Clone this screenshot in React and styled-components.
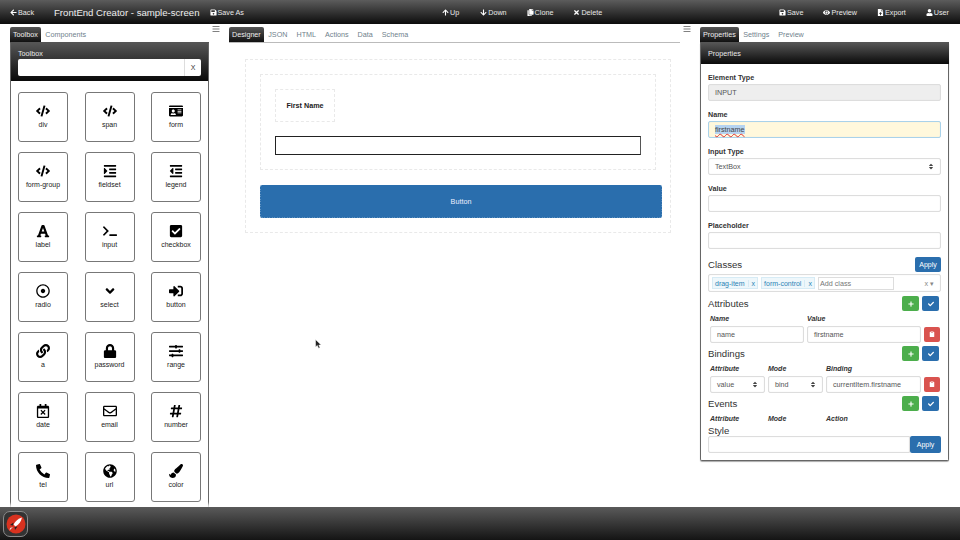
import React from 'react';
import styled, {createGlobalStyle} from 'styled-components';
import {
  FaArrowLeft, FaSave, FaArrowUp, FaArrowDown, FaCopy, FaTimes, FaEye, FaUser, FaFileUpload,
  FaBars, FaCode, FaIdCard, FaIndent, FaOutdent, FaFont, FaTerminal, FaCheckSquare, FaRegDotCircle,
  FaAngleDown, FaSignInAlt, FaLink, FaLock, FaSlidersH, FaRegCalendarTimes, FaRegEnvelope,
  FaHashtag, FaPhoneAlt, FaGlobeAmericas, FaPaintBrush, FaPlus, FaCheck, FaClipboard, FaSort
} from 'react-icons/fa';

const GlobalStyle = createGlobalStyle`
  html, body {
    margin: 0;
    padding: 0;
    background: #fff;
  }
  * {
    box-sizing: border-box;
  }
`;

const Page = styled.div`
  position: relative;
  width: 960px;
  height: 540px;
  display: flex;
  flex-direction: column;
  overflow: hidden;
  font-family: "Liberation Sans", Arial, sans-serif;
  font-size: 7px;
  color: #333;
`;

const TopBar = styled.div`
  flex: 0 0 24px;
  display: flex;
  align-items: center;
  padding: 0 11px 0 10px;
  background: linear-gradient(#5c5c5c, #0c0c0c);
  color: #e8e8e8;
`;

const BarGroup = styled.div`
  display: flex;
  align-items: center;
  width: ${p => p.$width || 'auto'};
  margin-left: ${p => p.$left || 0};
`;

const BarItem = styled.span`
  display: inline-flex;
  align-items: center;
  gap: 1px;
  margin-right: ${p => p.$gap || 0};
  font-size: 7.2px;
  white-space: nowrap;
  svg {
    width: 7px;
    height: 7px;
    color: #fff;
  }
`;

const Title = styled.span`
  margin: 0 10px 0 20px;
  font-size: 9.6px;
  color: #eee;
  white-space: nowrap;
`;

const Main = styled.div`
  flex: 1;
  min-height: 0;
  display: grid;
  grid-template-columns: 199px 451px 249px;
  column-gap: 20px;
  padding: 3px 0 0 10px;
  overflow: hidden;
  position: relative;
`;

const Column = styled.div`
  position: relative;
  min-width: 0;
`;

const Splitter = styled(FaBars)`
  position: absolute;
  top: -2px;
  left: -17px;
  width: 8px;
  height: 8px;
  color: #808080;
`;

const Tabs = styled.div`
  display: flex;
  height: 16px;
  border-bottom: 1px solid ${p => p.$line || '#555'};
`;

const Tab = styled.div`
  display: flex;
  align-items: center;
  height: 15px;
  padding: 0 ${p => p.$active ? '3px' : '4.5px'};
  border-radius: 2px 2px 0 0;
  font-size: 7.2px;
  color: ${p => p.$active ? '#eee' : '#6f7f8c'};
  background: ${p => p.$active ? 'linear-gradient(#555, #111)' : 'transparent'};
`;

const Panel = styled.div`
  border: 1px solid #666;
  border-top: 0;
  border-bottom: ${p => p.$closed ? '1px solid #666' : 0};
  border-radius: 0 0 2px 2px;
  height: ${p => p.$height};
  box-shadow: ${p => p.$closed ? '0 1px 1px #aaa' : 'none'};
`;

const ToolHeader = styled.div`
  height: 38px;
  padding: 6px 7px 0;
  color: #e8e8e8;
  font-size: 7.2px;
  background: linear-gradient(#555, #0a0a0a);
`;

const SearchRow = styled.div`
  display: flex;
  height: 17px;
  margin-top: 1px;
  background: #fff;
  border-radius: 2px;
  overflow: hidden;
`;

const SearchInput = styled.div`
  flex: 1;
`;

const SearchClear = styled.div`
  width: 17px;
  display: flex;
  align-items: center;
  justify-content: center;
  border-left: 1px solid #ddd;
  color: #333;
  font-size: 7px;
`;

const ToolGrid = styled.div`
  display: grid;
  grid-template-columns: repeat(3, 50px);
  justify-content: space-between;
  grid-auto-rows: 50px;
  row-gap: 10px;
  padding: 11px 7px 0 7px;
`;

const Tile = styled.div`
  display: flex;
  flex-direction: column;
  align-items: center;
  padding-top: 11px;
  border: 1px solid #777;
  border-radius: 3px;
  background: #fff;
  color: #222;
  font-size: 7px;
  svg {
    width: 14px;
    height: 14px;
    color: #000;
  }
`;

const TileLabel = styled.span`
  margin-top: 1.5px;
  line-height: 9px;
  white-space: nowrap;
`;

const Canvas = styled.div`
  margin: 16px 9px 0 16px;
  padding: 14px;
  height: 174px;
  border: 1px dashed #e9e9e9;
`;

const RowBox = styled.div`
  height: 96px;
  width: 396px;
  padding: 14px;
  border: 1px dashed #e9e9e9;
`;

const LabelBox = styled.div`
  display: flex;
  align-items: center;
  justify-content: center;
  width: 60px;
  height: 33px;
  border: 1px dashed #e9e9e9;
  font-size: 7.2px;
  font-weight: bold;
  color: #222;
`;

const BlackInput = styled.div`
  margin-top: 14px;
  width: 366px;
  height: 19px;
  border: 1.5px solid #222;
  border-right-color: #555;
`;

const WideButton = styled.div`
  display: flex;
  align-items: center;
  justify-content: center;
  margin-top: 15px;
  width: 402px;
  height: 33px;
  border: 1px dashed #fff;
  outline: 1px dashed #2a6ead;
  outline-offset: -1px;
  border-radius: 2px;
  background: #2a6ead;
  color: #eef;
  font-size: 7.2px;
`;

const PanelHeader = styled.div`
  height: 21px;
  display: flex;
  align-items: center;
  padding-left: 7px;
  margin: 0 -1px 0 0;
  color: #e8e8e8;
  font-size: 7.2px;
  background: linear-gradient(#555, #0a0a0a);
`;

const Form = styled.div`
  padding: 8px 7px 0;
`;

const Field = styled.div`
  height: 37px;
`;

const Label = styled.div`
  height: 12px;
  padding-top: 1px;
  line-height: 9px;
  font-size: 7.2px;
  font-weight: bold;
  color: #333;
`;

const Input = styled.div`
  display: flex;
  align-items: center;
  justify-content: space-between;
  height: ${p => p.$height || '17px'};
  width: ${p => p.$width || '100%'};
  padding: 0 ${p => p.$pad || '6px'};
  border: 1px solid ${p => p.$focus ? '#a9d2ea' : '#ddd'};
  border-radius: 2px;
  background: ${p => p.$disabled ? '#eee' : p.$focus ? '#fff8dc' : '#fff'};
  box-shadow: inset 0 0 1px #ddd;
  color: #555;
  font-size: 7.2px;
  white-space: nowrap;
  svg {
    width: 6px;
    height: 7px;
    color: #444;
  }
`;

const Selected = styled.span`
  background: #b5d3f0;
  color: #444;
  text-decoration: underline wavy #d33 0.5px;
`;

const SectionRow = styled.div`
  display: flex;
  align-items: center;
  justify-content: space-between;
  height: ${p => p.$height || '15px'};
`;

const Heading = styled.div`
  font-size: 9.6px;
  line-height: 11px;
  color: #333;
`;

const Btn = styled.div`
  display: inline-flex;
  align-items: center;
  justify-content: center;
  width: ${p => p.$width || '17px'};
  height: ${p => p.$height || '15px'};
  border-radius: 2px;
  background: ${p => p.$color || '#2a6ead'};
  color: #fff;
  font-size: 7px;
  svg {
    width: 6px;
    height: 6px;
  }
`;

const BtnGroup = styled.div`
  display: flex;
  gap: 3px;
  margin-right: 2px;
`;

const TagBox = styled(Input)`
  margin-top: 2px;
  height: 18px;
  padding: 0 3px;
  justify-content: flex-start;
  gap: 3px;
`;

const Tag = styled.span`
  display: inline-flex;
  align-items: center;
  height: 12px;
  padding: 0 2px;
  border: 1px solid #d6ebf5;
  background: #eef7fb;
  color: #2a83b5;
  font-size: 7px;
`;

const TagClose = styled.span`
  margin-left: 3px;
  padding-left: 3px;
  border-left: 1px solid #d6ebf5;
`;

const TagInput = styled.span`
  display: flex;
  align-items: center;
  width: 76px;
  height: 13px;
  padding-left: 1px;
  border: 1px solid #ddd;
  color: #777;
`;

const TagTail = styled.span`
  margin-left: auto;
  padding-right: 3px;
  color: #888;
`;

const ColHeads = styled.div`
  display: grid;
  grid-template-columns: ${p => p.$cols};
  column-gap: 3px;
  padding: 0 2px;
  margin-top: 2px;
  height: 10px;
  font-size: 7px;
  line-height: 9px;
  font-style: italic;
  font-weight: bold;
  color: #333;
`;

const ColRow = styled.div`
  display: grid;
  grid-template-columns: ${p => p.$cols} 16px;
  column-gap: 3px;
  align-items: center;
  padding: 0 1px 0 2px;
  margin-top: 1px;
  height: 18px;
`;

const StyleRow = styled.div`
  display: flex;
  height: 17px;
`;

const StyleHeading = styled(Heading)`
  margin-top: 1px;
  height: 11px;
`;

const StyleInput = styled(Input)`
  flex: 1;
  border-radius: 2px 0 0 2px;
`;

const Cursor = styled.svg`
  position: absolute;
  left: 315px;
  top: 315px;
  width: 7px;
  height: 10px;
`;

const BottomBar = styled.div`
  flex: 0 0 33px;
  display: flex;
  align-items: center;
  padding-left: 3px;
  background: linear-gradient(#5a5a5a, #141414);
  box-shadow: 0 -3px 3px rgba(255, 255, 255, 0.8);
  position: relative;
`;

const DockIcon = styled.div`
  display: flex;
  align-items: center;
  justify-content: center;
  width: 25px;
  height: 26px;
  border: 1px solid #8a8a8a;
  border-radius: 7px;
  background: #333;
`;

const tools = [
  ['div', FaCode], ['span', FaCode], ['form', FaIdCard],
  ['form-group', FaCode], ['fieldset', FaIndent], ['legend', FaOutdent],
  ['label', FaFont], ['input', FaTerminal], ['checkbox', FaCheckSquare],
  ['radio', FaRegDotCircle], ['select', FaAngleDown], ['button', FaSignInAlt],
  ['a', FaLink], ['password', FaLock], ['range', FaSlidersH],
  ['date', FaRegCalendarTimes], ['email', FaRegEnvelope], ['number', FaHashtag],
  ['tel', FaPhoneAlt], ['url', FaGlobeAmericas], ['color', FaPaintBrush]
];

const AddSave = () => (
  <BtnGroup>
    <Btn $color="#4cae4c"><FaPlus /></Btn>
    <Btn><FaCheck /></Btn>
  </BtnGroup>
);

const Logo = () => (
  <svg width="20" height="20" viewBox="0 0 20 20">
    <circle cx="10" cy="10" r="9.5" fill="#d8321f" />
    <path d="M16 3.5 C12.5 4.5 9.5 7 7.5 10.5 L9.5 12.5 C13 10.5 15.2 7.5 16 3.5 Z" fill="#fff" />
    <path d="M7.5 8.5 L4 11 L7 11.5 Z M11.5 12.5 L9 16 L8.5 13 Z" fill="#222" />
    <path d="M7 13 L3.5 16.5 L4 14 Z" fill="#ddd" />
  </svg>
);

const App = () => (
  <Page>
    <GlobalStyle />
    <TopBar>
      <BarGroup $width="432px">
        <BarItem><FaArrowLeft />Back</BarItem>
        <Title>FrontEnd Creator - sample-screen</Title>
        <BarItem><FaSave />Save As</BarItem>
      </BarGroup>
      <BarGroup>
        <BarItem $gap="21px"><FaArrowUp />Up</BarItem>
        <BarItem $gap="20px"><FaArrowDown />Down</BarItem>
        <BarItem $gap="20px"><FaCopy />Clone</BarItem>
        <BarItem><FaTimes />Delete</BarItem>
      </BarGroup>
      <BarGroup $left="auto">
        <BarItem $gap="20px"><FaSave />Save</BarItem>
        <BarItem $gap="20px"><FaEye />Preview</BarItem>
        <BarItem $gap="20px"><FaFileUpload />Export</BarItem>
        <BarItem><FaUser />User</BarItem>
      </BarGroup>
    </TopBar>

    <Main>
      <Column>
        <Tabs>
          <Tab $active>Toolbox</Tab>
          <Tab>Components</Tab>
        </Tabs>
        <Panel $height="480px">
          <ToolHeader>
            Toolbox
            <SearchRow>
              <SearchInput />
              <SearchClear>X</SearchClear>
            </SearchRow>
          </ToolHeader>
          <ToolGrid>
            {tools.map(([name, Icon]) => (
              <Tile key={name}>
                <Icon />
                <TileLabel>{name}</TileLabel>
              </Tile>
            ))}
          </ToolGrid>
        </Panel>
      </Column>

      <Column>
        <Splitter />
        <Tabs $line="#bbb">
          <Tab $active>Designer</Tab>
          <Tab>JSON</Tab>
          <Tab>HTML</Tab>
          <Tab>Actions</Tab>
          <Tab>Data</Tab>
          <Tab>Schema</Tab>
        </Tabs>
        <Canvas>
          <RowBox>
            <LabelBox>First Name</LabelBox>
            <BlackInput />
          </RowBox>
          <WideButton>Button</WideButton>
        </Canvas>
      </Column>

      <Column>
        <Splitter />
        <Tabs>
          <Tab $active>Properties</Tab>
          <Tab>Settings</Tab>
          <Tab>Preview</Tab>
        </Tabs>
        <Panel $height="418px" $closed>
          <PanelHeader>Properties</PanelHeader>
          <Form>
            <Field>
              <Label>Element Type</Label>
              <Input $disabled>INPUT</Input>
            </Field>
            <Field>
              <Label>Name</Label>
              <Input $focus><Selected>firstname</Selected></Input>
            </Field>
            <Field>
              <Label>Input Type</Label>
              <Input>TextBox<FaSort /></Input>
            </Field>
            <Field>
              <Label>Value</Label>
              <Input />
            </Field>
            <Field>
              <Label>Placeholder</Label>
              <Input />
            </Field>
            <SectionRow>
              <Heading>Classes</Heading>
              <Btn $width="26px">Apply</Btn>
            </SectionRow>
            <TagBox>
              <Tag>drag-item<TagClose>x</TagClose></Tag>
              <Tag>form-control<TagClose>x</TagClose></Tag>
              <TagInput>Add class</TagInput>
              <TagTail>x ▾</TagTail>
            </TagBox>
            <SectionRow $height="17px" style={{marginTop: 3}}>
              <Heading>Attributes</Heading>
              <AddSave />
            </SectionRow>
            <ColHeads $cols="94px 114px">
              <span>Name</span>
              <span>Value</span>
            </ColHeads>
            <ColRow $cols="94px 114px">
              <Input>name</Input>
              <Input>firstname</Input>
              <Btn $color="#d9534f" $width="16px"><FaClipboard /></Btn>
            </ColRow>
            <SectionRow $height="17px" style={{marginTop: 2}}>
              <Heading>Bindings</Heading>
              <AddSave />
            </SectionRow>
            <ColHeads $cols="55px 55px 95px">
              <span>Attribute</span>
              <span>Mode</span>
              <span>Binding</span>
            </ColHeads>
            <ColRow $cols="55px 55px 95px">
              <Input>value<FaSort /></Input>
              <Input>bind<FaSort /></Input>
              <Input>currentItem.firstname</Input>
              <Btn $color="#d9534f" $width="16px"><FaClipboard /></Btn>
            </ColRow>
            <SectionRow $height="17px" style={{marginTop: 2}}>
              <Heading>Events</Heading>
              <AddSave />
            </SectionRow>
            <ColHeads $cols="55px 55px 95px">
              <span>Attribute</span>
              <span>Mode</span>
              <span>Action</span>
            </ColHeads>
            <StyleHeading>Style</StyleHeading>
            <StyleRow>
              <StyleInput />
              <Btn $width="31px" $height="17px">Apply</Btn>
            </StyleRow>
          </Form>
        </Panel>
      </Column>

      <Cursor viewBox="0 0 7 10">
        <path d="M0.5 0.5 L0.5 8 L2.3 6.4 L3.6 9.3 L5 8.7 L3.8 6 L6.2 6 Z" fill="#222" stroke="#fff" strokeWidth="0.5" />
      </Cursor>
    </Main>

    <BottomBar>
      <DockIcon><Logo /></DockIcon>
    </BottomBar>
  </Page>
);

export default App;
